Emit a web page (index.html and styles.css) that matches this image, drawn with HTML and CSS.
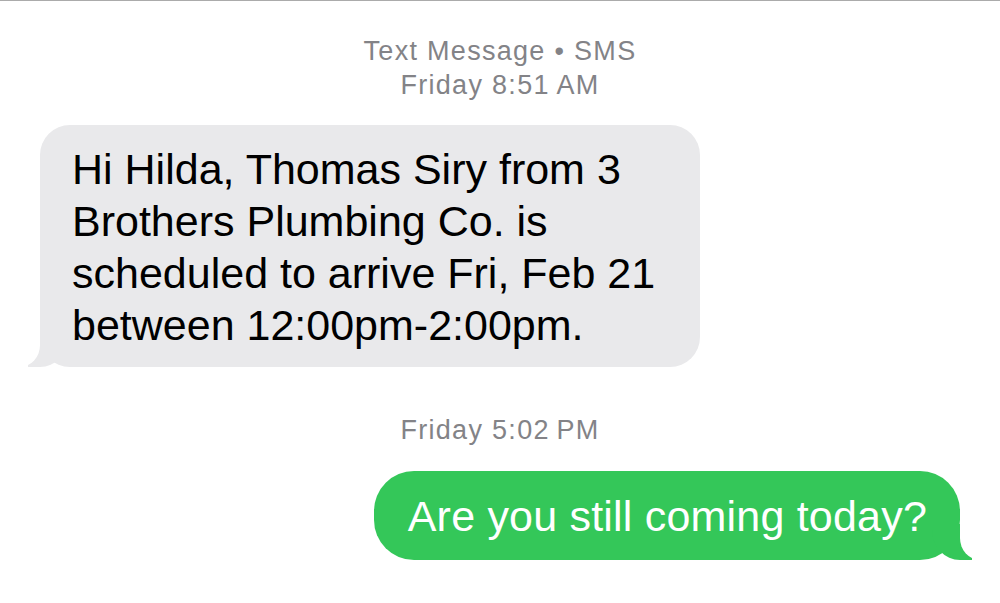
FILE: index.html
```html
<!DOCTYPE html>
<html lang="en">
<head>
    <meta charset="UTF-8">
    <meta name="viewport" content="width=device-width, initial-scale=1.0">
    <title>Text Message</title>
    <link rel="stylesheet" href="styles.css">
</head>
<body>
    <div class="thread">
        <!-- cabecera del hilo -->
        <div class="stamp stamp-top">
            <div>Text Message • SMS</div>
            <div><span class="day">Friday</span> 8:51&#8201;AM</div>
        </div>

        <div class="bubble them">
            Hi Hilda, Thomas Siry from 3 Brothers Plumbing Co. is scheduled to arrive Fri, Feb 21 between 12:00pm-2:00pm.
        </div>

        <div class="stamp stamp-mid">
            <div><span class="day">Friday</span> 5:02&#8201;PM</div>
        </div>

        <div class="row-me">
            <div class="bubble me">Are you still coming today?</div>
        </div>
    </div>
</body>
</html>
```

FILE: styles.css
```css
body {
    margin: 0;
    background-color: #fff;
    font-family: "Liberation Sans", Arial, sans-serif;
}
.thread {
    border-top: 1px solid #ababab;
    height: 602px;
    overflow: hidden;
}
.stamp {
    text-align: center;
    color: #838387;
    font-size: 27px;
    line-height: 34px;
    letter-spacing: 1.3px;
}
.stamp-top {
    padding-top: 33px;
    margin-bottom: 23px;
}
.stamp-mid {
    margin-top: 46px;
    margin-bottom: 24px;
}

/* burbujas */
.bubble {
    position: relative;
    box-sizing: border-box;
    font-size: 43px;
    line-height: 52px;
    border-radius: 30px;
}
.them {
    width: 660px;
    margin-left: 40px;
    padding: 18px 30px 16px 32px;
    background-color: #e9e9eb;
    color: #000;
}
.row-me {
    display: flex;
    justify-content: flex-end;
    padding-right: 40px;
}
.me {
    padding: 19px 33px 18px 34px;
    background-color: #34c759;
    color: #fff;
    letter-spacing: 0.2px;
    border-radius: 40px;
}

/* colitas */
.them::before,
.them::after,
.me::before,
.me::after {
    content: "";
    position: absolute;
    bottom: 0;
    height: 36px;
}
.them::before {
    left: -12px;
    width: 40px;
    background-color: #e9e9eb;
    border-bottom-right-radius: 28px 30px;
}
.them::after {
    left: -50px;
    width: 50px;
    background-color: #fff;
    border-bottom-right-radius: 20px 22px;
}
.me::before {
    right: -12px;
    width: 40px;
    background-color: #34c759;
    border-bottom-left-radius: 28px 30px;
}
.me::after {
    right: -50px;
    width: 50px;
    background-color: #fff;
    border-bottom-left-radius: 20px 22px;
}
```
